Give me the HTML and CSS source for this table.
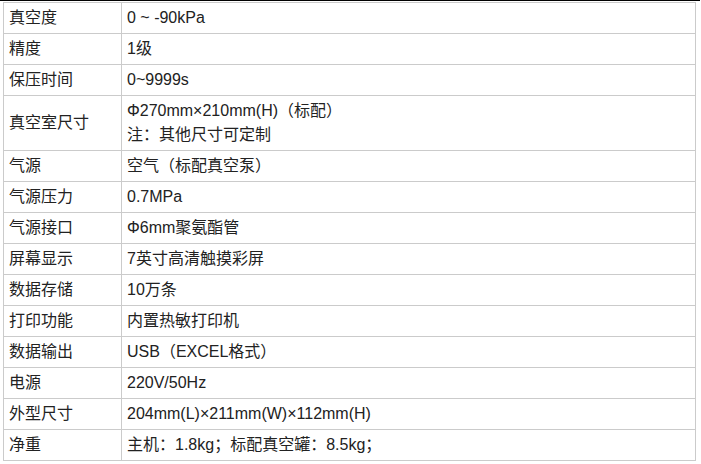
FILE: index.html
```html
<!DOCTYPE html>
<html lang="zh">
<head>
<meta charset="utf-8">
<link rel="stylesheet" href="styles.css">
</head>
<body>
<div class="topline"></div>
<table class="spec">
  <colgroup><col class="c1"><col class="c2"></colgroup>
  <tbody>
    <tr><td>真空度</td><td>0 ~ -90kPa</td></tr>
    <tr><td>精度</td><td>1级</td></tr>
    <tr><td>保压时间</td><td>0~9999s</td></tr>
    <tr><td>真空室尺寸</td><td>Φ270mm×210mm(H)（标配）<br>注：其他尺寸可定制</td></tr>
    <tr><td>气源</td><td>空气（标配真空泵）</td></tr>
    <tr><td>气源压力</td><td>0.7MPa</td></tr>
    <tr><td>气源接口</td><td>Φ6mm聚氨酯管</td></tr>
    <tr><td>屏幕显示</td><td>7英寸高清触摸彩屏</td></tr>
    <tr><td>数据存储</td><td>10万条</td></tr>
    <tr><td>打印功能</td><td>内置热敏打印机</td></tr>
    <tr><td>数据输出</td><td>USB（EXCEL格式）</td></tr>
    <tr><td>电源</td><td>220V/50Hz</td></tr>
    <tr><td>外型尺寸</td><td>204mm(L)×211mm(W)×112mm(H)</td></tr>
    <tr><td>净重</td><td>主机：1.8kg；标配真空罐：8.5kg；</td></tr>
  </tbody>
</table>
</body>
</html>
```
FILE: styles.css
```css
html, body {
  margin: 0;
  padding: 0;
  background: #fff;
}
body {
  font-family: "Liberation Sans", Arial, "Noto Sans CJK SC", sans-serif;
  font-size: 16px;
  color: #222;
}
.topline {
  height: 1px;
  width: 700px;
  background: #000;
  margin-bottom: 1px;
}
.spec {
  border-collapse: collapse;
  margin-left: 3px;
  width: 693px;
  table-layout: fixed;
}
.spec .c1 { width: 118px; }
.spec td {
  border: 1px solid #cbcbcb;
  padding: 3px 5px;
  line-height: 24px;
  vertical-align: middle;
  white-space: nowrap;
}
```
